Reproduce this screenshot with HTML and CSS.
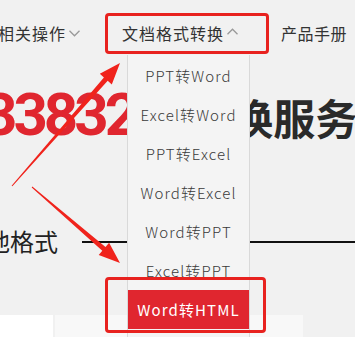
FILE: index.html
```html
<!DOCTYPE html>
<html lang="zh-CN">
<head>
<meta charset="utf-8">
<title>文档格式转换</title>
<link rel="stylesheet" href="styles.css">
</head>
<body>
<div class="page">
  <nav class="nav">
    <div class="nav-item nav-first">
      <span>相关操作</span>
      <svg class="chev" width="11" height="7" viewBox="0 0 11 7"><polyline points="0.5,0.8 5.5,5.8 10.5,0.8" fill="none" stroke="#999" stroke-width="1.3"/></svg>
    </div>
    <div class="nav-item nav-active">
      <span>文档格式转换</span>
      <svg class="chev chev-up" width="11" height="7" viewBox="0 0 11 7"><polyline points="0.5,6.2 5.5,1.2 10.5,6.2" fill="none" stroke="#999" stroke-width="1.3"/></svg>
      <ul class="dropdown">
        <li>PPT转Word</li>
        <li>Excel转Word</li>
        <li>PPT转Excel</li>
        <li>Word转Excel</li>
        <li>Word转PPT</li>
        <li>Excel转PPT</li>
        <li class="current">Word转HTML</li>
      </ul>
    </div>
    <div class="nav-item nav-last">
      <span>产品手册</span>
    </div>
  </nav>

  <h1 class="hero"><span class="num">33832</span><span class="hero-text">次转换服务</span></h1>

  <div class="sub">
    <h2 class="sub-title">其他格式</h2>
    <div class="sub-line"></div>
  </div>

  <div class="cards">
    <div class="card card-a"></div>
    <div class="card card-b"></div>
  </div>

  <div class="mark mark-top"></div>
  <div class="mark mark-bottom"></div>
  <svg class="arrows" width="355" height="337" viewBox="0 0 355 337">
    <polygon fill="#f0231c" points="11.6,185.7 12.4,186.3 107.7,80.7 111.8,84.4 120,63 99.8,73.8 103.9,77.5"/>
    <polygon fill="#f0231c" points="32.3,186.6 31.7,187.4 102.3,250.8 98.7,255 120,263 109.1,242.8 105.5,247"/>
  </svg>
</div>
</body>
</html>
```

FILE: styles.css
```css
* { box-sizing: border-box; }
html, body {
  margin: 0;
  padding: 0;
  background: #f1f1f1;
  overflow: hidden;
}
body {
  font-family: "Noto Sans CJK SC", "Noto Sans", sans-serif;
  color: #333;
}
.page {
  position: relative;
  width: 355px;
  height: 337px;
  overflow: hidden;
}
.nav {
  display: flex;
  align-items: center;
  height: 55px;
  padding-top: 11px;
  font-size: 16px;
  line-height: 22px;
  letter-spacing: 1px;
  color: #333;
}
.nav-item {
  display: flex;
  align-items: center;
  white-space: nowrap;
}
.nav-first { margin-left: -2px; }
.nav-active {
  position: relative;
  margin-left: 42px;
}
.nav-last { margin-left: 43px; letter-spacing: 0.5px; }
.chev { margin-left: 3px; margin-top: 1px; }
.chev-up { margin-left: 3px; margin-top: -4px; }

.dropdown {
  position: absolute;
  left: 5px;
  top: 33px;
  width: 123px;
  height: 300px;
  margin: 0;
  padding: 1px 0 0;
  list-style: none;
  background: #f4f4f4;
  border-left: 1px solid #d9d9d9;
  border-right: 1px solid #d9d9d9;
  z-index: 2;
}
.dropdown li {
  height: 39px;
  line-height: 39px;
  text-align: center;
  font-size: 15px;
  font-weight: 300;
  letter-spacing: 1.1px;
  color: #3a3a3a;
}
.dropdown li.current {
  background: #e0262f;
  color: #fff;
  font-weight: 400;
}

.hero {
  display: flex;
  align-items: baseline;
  margin: 30px 0 0 -17px;
  font-weight: 700;
  white-space: nowrap;
}
.num {
  font-family: Roboto, "Noto Sans", sans-serif;
  font-size: 60px;
  line-height: 60px;
  letter-spacing: -4px;
  color: #e0262f;
}
.hero-text {
  font-size: 42px;
  line-height: 42px;
  color: #2a2a2a;
  margin-left: 12px;
}

.sub {
  display: flex;
  align-items: center;
  height: 30px;
  margin-top: 81px;
  margin-left: -38px;
}
.sub-title {
  margin: 0;
  font-size: 24px;
  line-height: 30px;
  font-weight: 400;
  color: #222;
  white-space: nowrap;
}
.sub-line {
  flex: 1;
  height: 1.5px;
  margin-left: 24px;
  margin-top: 2px;
  background: #111;
}

.cards {
  display: flex;
  gap: 2px;
  margin-top: 59px;
  height: 40px;
}
.card { height: 40px; }
.card-a { width: 53px; background: #fff; }
.card-b { width: 248px; background: #f8f8f8; }

.mark {
  position: absolute;
  border: 3px solid #e8221f;
  border-radius: 4px;
  z-index: 3;
}
.mark-top { left: 105px; top: 13px; width: 164px; height: 41px; }
.mark-bottom { left: 105px; top: 277px; width: 161px; height: 56px; }
.arrows {
  position: absolute;
  left: 0;
  top: 0;
  z-index: 4;
}
```
